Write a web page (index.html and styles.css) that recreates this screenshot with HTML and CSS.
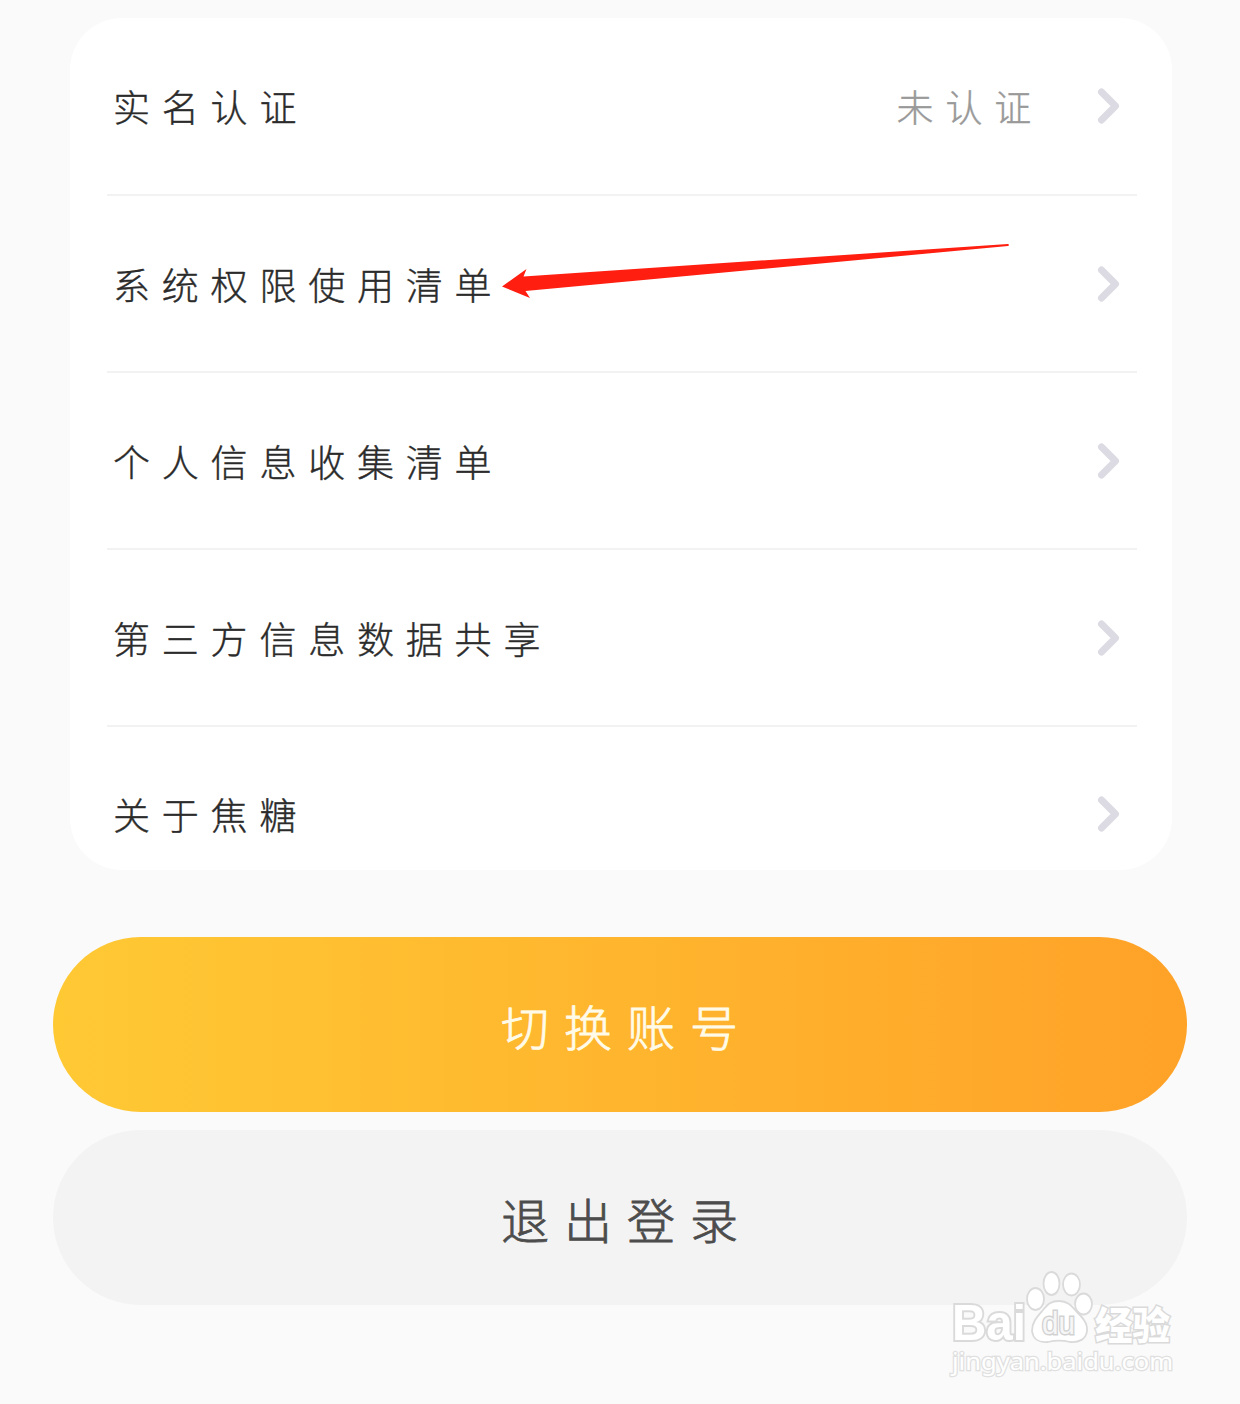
FILE: index.html
```
<!DOCTYPE html>
<html lang="zh-CN">
<head>
  <meta charset="UTF-8">
  <title>设置</title>
  <meta name="viewport" content="width=device-width, initial-scale=1">
  <link rel="stylesheet" href="styles.css">
</head>
<body>
  <div class="card">
    <div class="row">
      <span class="label">实名认证</span>
      <span class="value">未认证</span>
      <svg class="chevron" viewBox="0 0 24 36"><path d="M4.500 4 L18.500 18 L4.500 32"/></svg>
    </div>
    <div class="row">
      <span class="label">系统权限使用清单</span>
      <svg class="chevron" viewBox="0 0 24 36"><path d="M4.500 4 L18.500 18 L4.500 32"/></svg>
      <svg class="arrow" viewBox="0 0 510 56"><path d="M1 44.500 L25.500 27 L22.500 34.500 L507 2 Q509 3 507 4 L24.500 49 L29 56 Z"/></svg>
    </div>
    <div class="row">
      <span class="label">个人信息收集清单</span>
      <svg class="chevron" viewBox="0 0 24 36"><path d="M4.500 4 L18.500 18 L4.500 32"/></svg>
    </div>
    <div class="row">
      <span class="label">第三方信息数据共享</span>
      <svg class="chevron" viewBox="0 0 24 36"><path d="M4.500 4 L18.500 18 L4.500 32"/></svg>
    </div>
    <div class="row">
      <span class="label">关于焦糖</span>
      <svg class="chevron" viewBox="0 0 24 36"><path d="M4.500 4 L18.500 18 L4.500 32"/></svg>
    </div>
  </div>

  <button class="btn btn-switch">切换账号</button>
  <button class="btn btn-logout">退出登录</button>

  <svg class="watermark" viewBox="0 0 240 120">
    <g class="mark">
      <text class="bai" x="12" y="70" textLength="74" lengthAdjust="spacingAndGlyphs">Bai</text>
      <ellipse cx="95.500" cy="29" rx="8.500" ry="11"/>
      <ellipse cx="111.500" cy="13.500" rx="8" ry="11.500"/>
      <ellipse cx="131.500" cy="14.500" rx="8.500" ry="11"/>
      <ellipse cx="143.500" cy="34" rx="8.500" ry="10.500"/>
      <path d="M119 31 C127 31 131 35 136 41 C142 47 148 53 147 61 C146 69 139 73 130 72 C122 70 116 70 108 72 C99 73 93 69 92 61 C92 52 97 47 103 40 C108 34 111 31 119 31 Z"/>
      <text class="du" x="102" y="64" textLength="33" lengthAdjust="spacingAndGlyphs">du</text>
      <text class="jy" x="155" y="69" textLength="75" lengthAdjust="spacingAndGlyphs">经验</text>
      <text class="url" x="12" y="100" textLength="221" lengthAdjust="spacingAndGlyphs">jingyan.baidu.com</text>
    </g>
  </svg>
</body>
</html>
```
FILE: styles.css
```
* {
  box-sizing: border-box;
}
body {
  margin: 0;
  padding: 18px 53px 0;
  height: 1404px;
  position: relative;
  overflow: hidden;
  background: #fafafa;
  font-family: "Noto Sans CJK SC", sans-serif;
  font-weight: 300;
}
.card {
  height: 852px;
  margin: 0 15px 0 17px;
  padding: 0 35px 0 37px;
  background: #fff;
  border-radius: 52px;
  overflow: hidden;
}
.row {
  position: relative;
  display: flex;
  align-items: center;
  height: 177px;
  padding: 0 16px 0 6px;
  border-bottom: 2px solid #f2f2f3;
}
.row:first-child {
  height: 178px;
}
.row:last-child {
  height: 174px;
  border-bottom: none;
}
.label,
.value {
  font-size: 37px;
  letter-spacing: 11.8px;
  -webkit-text-stroke: 0.4px currentColor;
}
.label {
  flex: 1;
  color: #2b2b2b;
}
.value {
  margin-right: 54px;
  color: #999;
}
.chevron {
  width: 24px;
  height: 36px;
  fill: none;
  stroke: #dcdbe3;
  stroke-width: 7;
  stroke-linecap: round;
  stroke-linejoin: round;
}
.arrow {
  position: absolute;
  left: 394px;
  top: 46px;
  width: 510px;
  height: 56px;
  fill: #ff1e10;
}
.btn {
  display: block;
  width: 100%;
  height: 175px;
  border: none;
  border-radius: 88px;
  padding: 0 0 0 14px;
  font-family: inherit;
  font-weight: 300;
  font-size: 48px;
  letter-spacing: 15px;
  -webkit-text-stroke: 0.8px currentColor;
}
.btn-switch {
  margin-top: 67px;
  background: linear-gradient(to right, #ffc934, #ffa228);
  color: #fffbe8;
}
.btn-logout {
  margin-top: 18px;
  background: #f3f3f3;
  color: #4c4c4c;
}
.watermark {
  position: absolute;
  left: 940px;
  top: 1270px;
  width: 240px;
  height: 120px;
}
.mark {
  fill: #fff;
  stroke: #dadada;
  stroke-width: 1.8;
}
.mark text {
  paint-order: stroke;
  stroke-width: 3;
}
.mark .bai {
  font: bold 50px "Liberation Sans", sans-serif;
  stroke-width: 4;
}
.mark .du {
  font: 32px "Liberation Sans", sans-serif;
  fill: #f6f6f6;
  stroke: #d2d2d2;
  stroke-width: 3;
}
.mark .jy {
  font: 900 38px "Noto Sans CJK SC", sans-serif;
}
.mark .url {
  font: 24px "Noto Sans", sans-serif;
  stroke: #e0e0e0;
  stroke-width: 2.5;
}
```
